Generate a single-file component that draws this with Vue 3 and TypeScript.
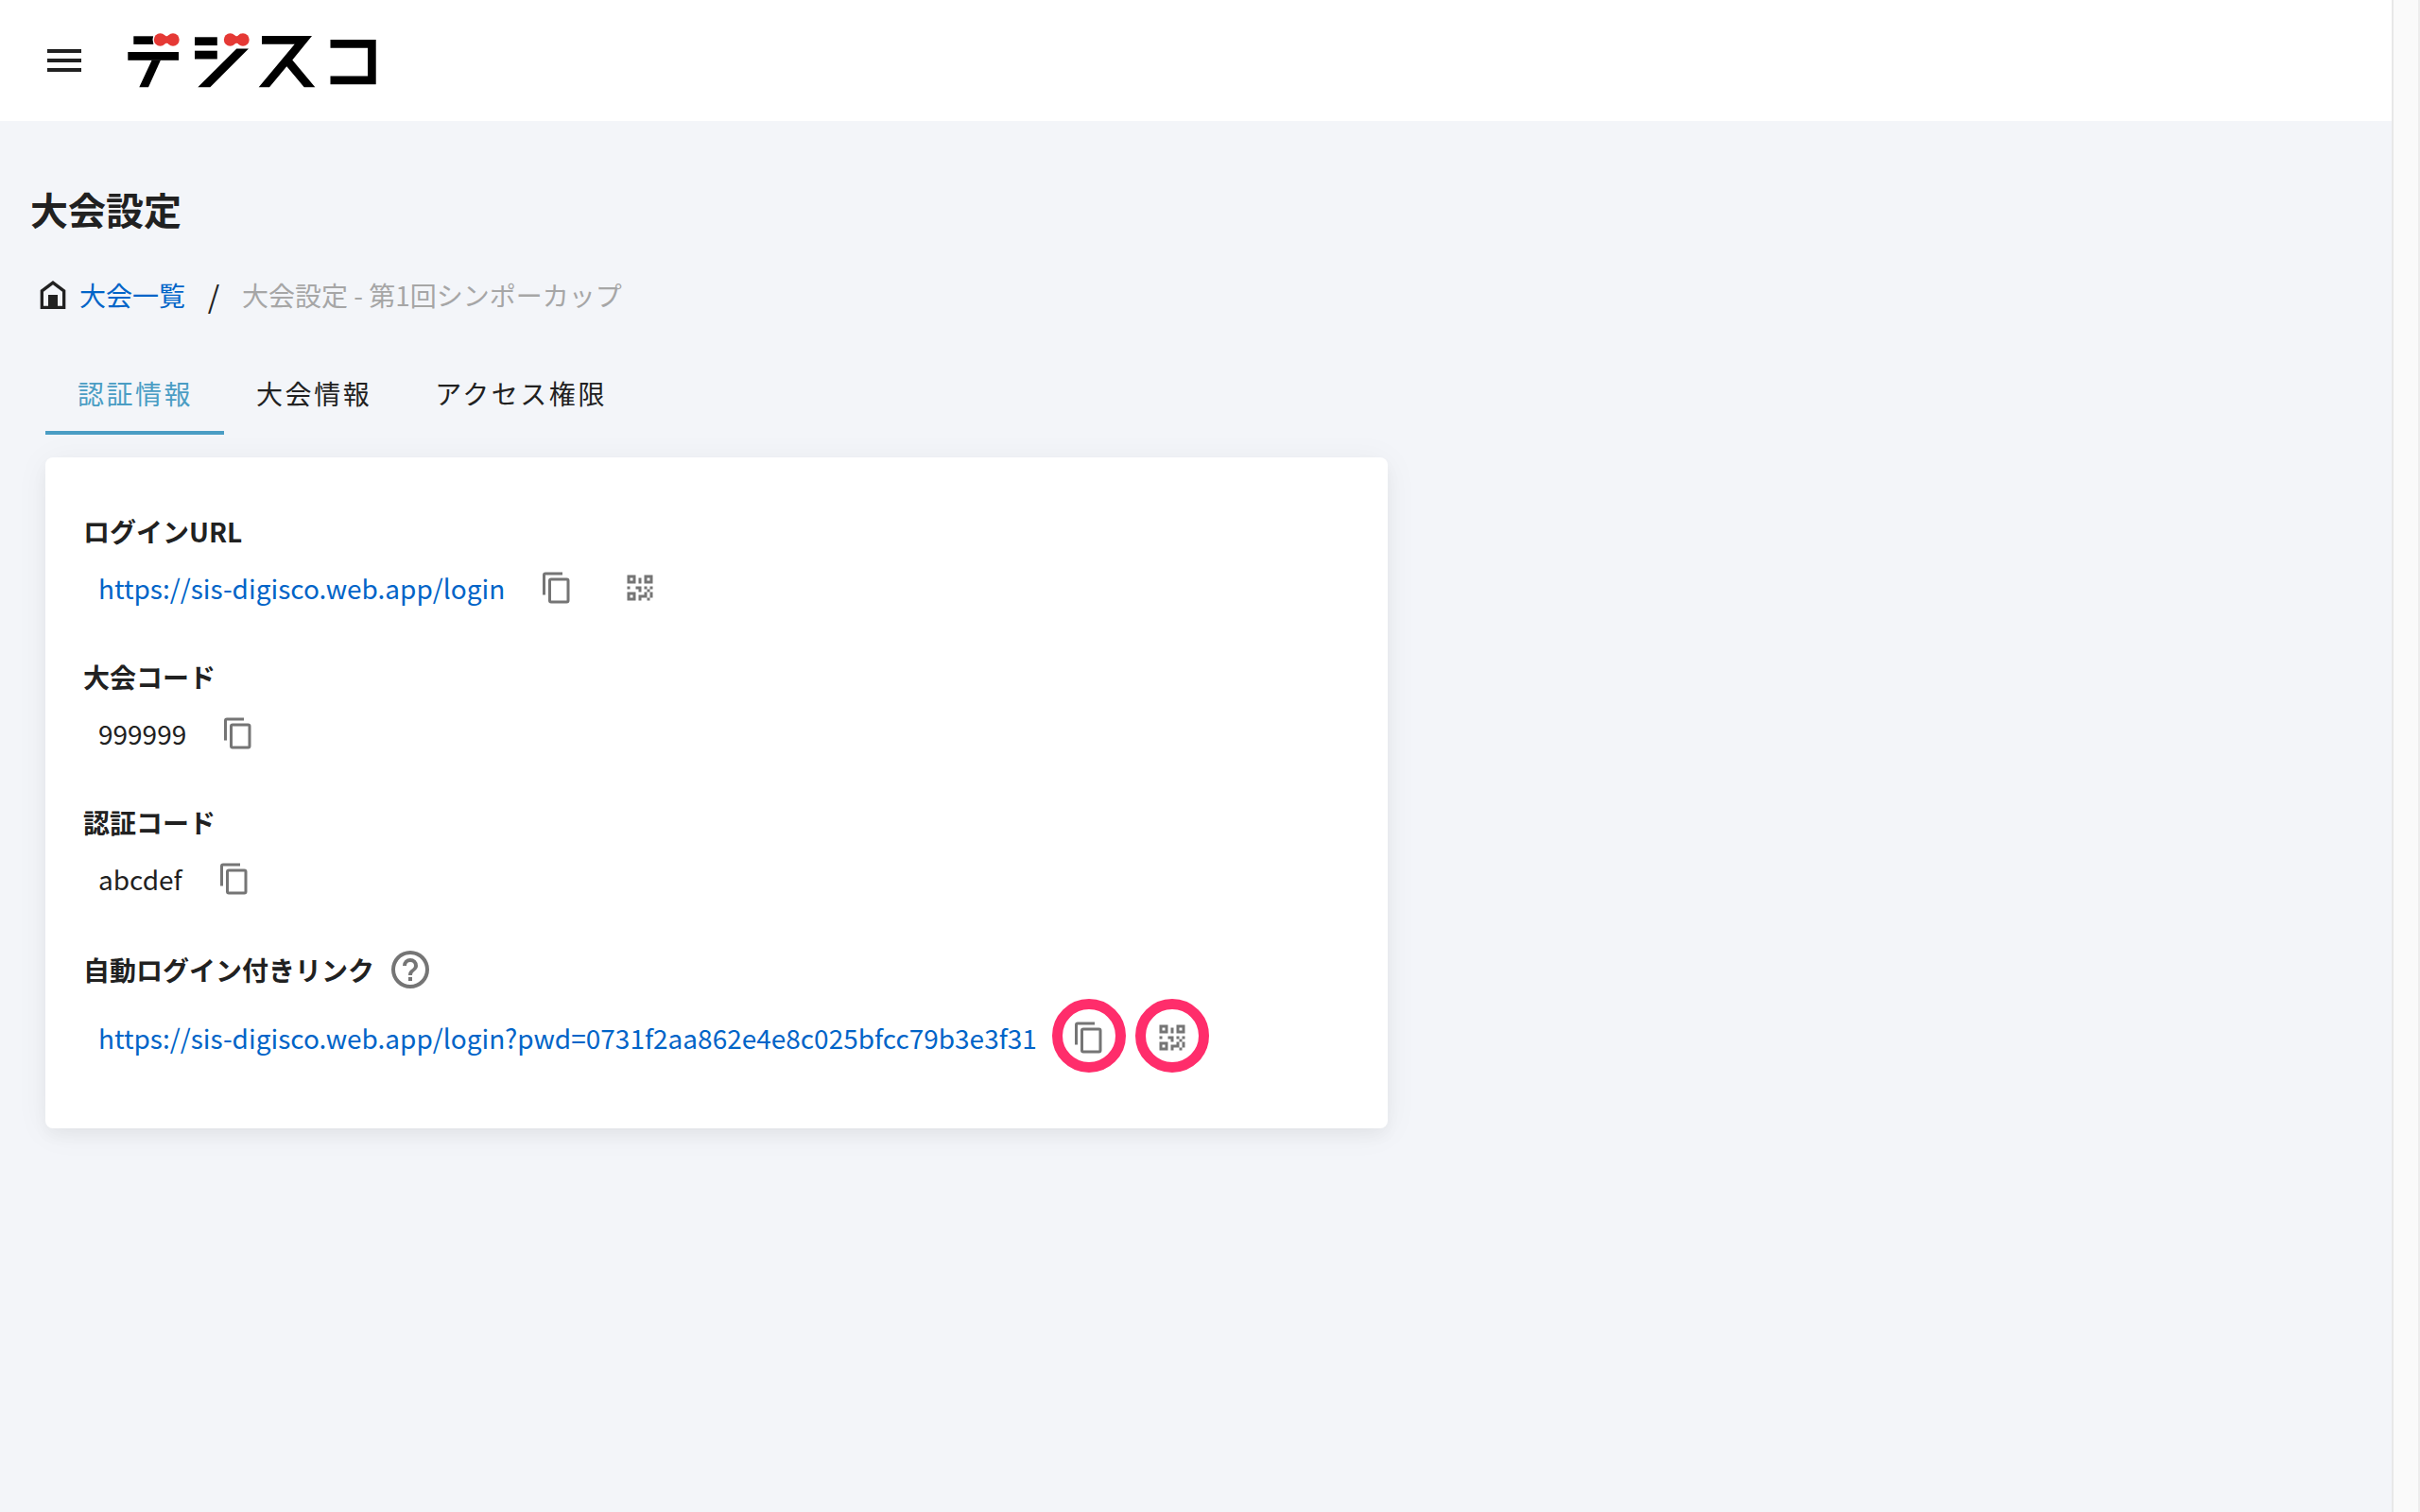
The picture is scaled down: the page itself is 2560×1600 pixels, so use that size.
<script setup lang="ts">
import { ref } from 'vue'

interface Entry {
  label: string
  value: string
  link: boolean
  qr: boolean
  help: boolean
  marked: boolean
}

const tabs: string[] = ['認証情報', '大会情報', 'アクセス権限']
const activeTab = ref(0)

const entries: Entry[] = [
  { label: 'ログインURL', value: 'https://sis-digisco.web.app/login', link: true, qr: true, help: false, marked: false },
  { label: '大会コード', value: '999999', link: false, qr: false, help: false, marked: false },
  { label: '認証コード', value: 'abcdef', link: false, qr: false, help: false, marked: false },
  {
    label: '自動ログイン付きリンク',
    value: 'https://sis-digisco.web.app/login?pwd=0731f2aa862e4e8c025bfcc79b3e3f31',
    link: true,
    qr: true,
    help: true,
    marked: true,
  },
]

const icons = {
  menu: 'M3,6H21V8H3V6M3,11H21V13H3V11M3,16H21V18H3V16Z',
  home: 'M12,3L20,9V21H4V9L12,3M6,19H9V12H15V19H18V10L12,5.5L6,10V19Z',
  copy: 'M19,21H8V7H19M19,5H8A2,2 0 0,0 6,7V21A2,2 0 0,0 8,23H19A2,2 0 0,0 21,21V7A2,2 0 0,0 19,5M16,1H4A2,2 0 0,0 2,3V17H4V3H16V1Z',
  qr: 'M3,11H5V13H3V11M11,5H13V9H11V5M9,11H13V15H11V13H9V11M15,11H17V13H19V11H21V13H19V15H21V19H19V21H17V19H13V21H11V17H15V15H17V13H15V11M19,19V15H17V19H19M15,3H21V9H15V3M17,5V7H19V5H17M3,3H9V9H3V3M5,5V7H7V5H5M3,15H9V21H3V15M5,17V19H7V17H5Z',
  help: 'M11,18H13V16H11V18M12,2A10,10 0 0,0 2,12A10,10 0 0,0 12,22A10,10 0 0,0 22,12A10,10 0 0,0 12,2M12,20C7.59,20 4,16.41 4,12C4,7.59 7.59,4 12,4C16.41,4 20,7.59 20,12C20,16.41 16.41,20 12,20M12,6A4,4 0 0,0 8,10H10A2,2 0 0,1 12,8A2,2 0 0,1 14,10C14,12 11,11.75 11,15H13C13,12.75 16,12.5 16,10A4,4 0 0,0 12,6Z',
}

function copy(text: string): void {
  navigator.clipboard?.writeText(text)
}
</script>

<template>
  <div class="shell">
    <div class="page">
      <header class="bar">
        <button class="menu" type="button" aria-label="メニュー">
          <svg viewBox="0 0 24 24"><path :d="icons.menu" /></svg>
        </button>
        <svg class="logo" viewBox="132 32 270 64" role="img" aria-label="デジスコ">
          <rect x="141.3" y="38.3" width="21" height="8.6" />
          <rect x="135.3" y="55" width="53.7" height="8.8" />
          <path d="M160.7,63.5H170L157,92.3H147.3Z" />
          <rect x="206" y="39.3" width="23.8" height="8.8" />
          <rect x="206" y="53.7" width="23.8" height="8.8" />
          <path d="M250.3,51.6H263L222.3,92.3H209.3Z" />
          <path d="M277,38H330L309.3,63.5L333.3,92.3H321.7L303.3,70.3L285,92.3H273.7L311.7,46.7H277Z" />
          <path d="M349.5,42H397.7V89.3H349.5V80.5H389V50.7H349.5Z" />
          <g class="bow">
            <circle class="halo" cx="169.5" cy="42" r="8" />
            <circle cx="169.5" cy="42" r="6.7" />
            <circle cx="183" cy="42" r="6.7" />
            <path d="M173,37Q176.2,39.4 179.5,37V47Q176.2,44.6 173,47Z" />
            <circle cx="243.5" cy="42" r="6.7" />
            <circle cx="257" cy="42" r="6.7" />
            <path d="M247,37Q250.2,39.4 253.5,37V47Q250.2,44.6 247,47Z" />
          </g>
        </svg>
      </header>

      <main class="content">
        <h1>大会設定</h1>

        <nav class="crumbs" aria-label="パンくず">
          <svg class="home" viewBox="0 0 24 24"><path :d="icons.home" /></svg>
          <a href="#">大会一覧</a>
          <span class="slash">/</span>
          <span class="current">大会設定 - 第1回シンポーカップ</span>
        </nav>

        <div class="tabs" role="tablist">
          <button
            v-for="(tab, i) in tabs"
            :key="tab"
            type="button"
            role="tab"
            :aria-selected="i === activeTab"
            :class="['tab', { active: i === activeTab }]"
            @click="activeTab = i"
          >{{ tab }}</button>
        </div>

        <section class="card">
          <div v-for="entry in entries" :key="entry.label" :class="['entry', { tall: entry.help }]">
            <h2>
              {{ entry.label }}
              <svg v-if="entry.help" class="help" viewBox="0 0 24 24"><path :d="icons.help" /></svg>
            </h2>
            <div class="row">
              <a v-if="entry.link" class="value" :href="entry.value">{{ entry.value }}</a>
              <span v-else class="value">{{ entry.value }}</span>
              <button :class="['action', { marked: entry.marked }]" type="button" aria-label="コピー" @click="copy(entry.value)">
                <svg viewBox="0 0 24 24"><path :d="icons.copy" /></svg>
              </button>
              <button v-if="entry.qr" :class="['action', { marked: entry.marked }]" type="button" aria-label="QRコード">
                <svg viewBox="0 0 24 24"><path :d="icons.qr" /></svg>
              </button>
            </div>
          </div>
        </section>
      </main>
    </div>
    <div class="track"></div>
  </div>
</template>

<style>
body {
  background: #f3f5f9;
}
</style>

<style scoped>
.shell {
  display: flex;
  min-height: 100vh;
  font-family: "Noto Sans CJK JP", sans-serif;
  font-size: 28px;
  line-height: 40px;
  color: #212121;
}
.page {
  flex: 1;
  min-width: 0;
}
.track {
  box-sizing: border-box;
  width: 30px;
  background: #fafafa;
  border-left: 2px solid #e8e8e8;
  border-right: 2px solid #ededed;
}
button {
  padding: 0;
  border: 0;
  background: none;
  font: inherit;
  color: inherit;
  cursor: pointer;
}
svg {
  display: block;
  flex: none;
  fill: currentColor;
}
a {
  color: #0064c8;
  text-decoration: none;
}
.bar {
  display: flex;
  align-items: center;
  gap: 40px;
  height: 128px;
  padding-left: 44px;
  background: #fff;
}
.menu svg {
  width: 48px;
  height: 48px;
}
.logo {
  width: 270px;
  height: 64px;
  color: #000;
}
.bow {
  fill: #e53935;
}
.halo {
  fill: #fff;
}
.content {
  padding: 64px 32px;
}
h1 {
  margin: 0;
  font-size: 40px;
  line-height: 58px;
  font-weight: 700;
}
.crumbs {
  display: flex;
  align-items: center;
  margin-top: 42px;
  padding-left: 4px;
}
.home {
  width: 40px;
  height: 40px;
  margin-right: 8px;
}
.slash {
  width: 60px;
  font-size: 32px;
  text-align: center;
}
.current {
  color: #a6a6a6;
}
.tabs {
  display: flex;
  margin: 44px 16px 0;
}
.tab {
  height: 84px;
  padding: 0 33px 0 34px;
  border-bottom: 4px solid transparent;
  letter-spacing: 0.09em;
}
.tab.active {
  color: #4a9dc4;
  border-bottom-color: #4a9dc4;
}
.card {
  box-sizing: border-box;
  max-width: 1420px;
  margin: 24px 16px 0;
  padding: 58px 40px 46px;
  border-radius: 8px;
  background: #fff;
  box-shadow: 0 8px 16px rgba(0, 0, 0, 0.04), 0 4px 36px rgba(0, 0, 0, 0.05);
}
.entry {
  margin-bottom: 34px;
}
.entry:last-child {
  margin-bottom: 0;
}
h2 {
  display: flex;
  align-items: center;
  gap: 14px;
  height: 40px;
  margin: 0;
  font-size: 28px;
  line-height: 40px;
  font-weight: 700;
}
.row {
  display: flex;
  align-items: center;
  gap: 16px;
  height: 80px;
  padding-left: 16px;
}
.value {
  margin-right: 3px;
}
.help {
  width: 48px;
  height: 48px;
  color: #757575;
}
.tall h2 {
  height: 44px;
}
.tall .row {
  height: 100px;
}
.action {
  position: relative;
  display: flex;
  align-items: center;
  justify-content: center;
  width: 72px;
  height: 72px;
  color: #757575;
}
.action svg {
  width: 36px;
  height: 36px;
}
.marked::after {
  content: "";
  position: absolute;
  inset: -5px -3px -1px;
  border: 11px solid #ff2d6b;
  border-radius: 50%;
}
</style>
